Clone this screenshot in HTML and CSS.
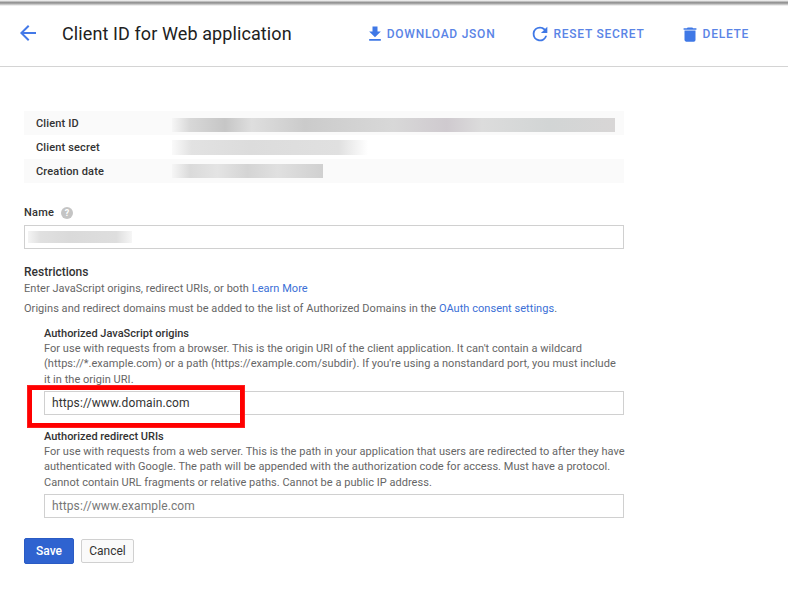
FILE: index.html
```html
<!DOCTYPE html>
<html lang="en">
<head>
<meta charset="utf-8">
<title>Client ID for Web application</title>
<link rel="stylesheet" href="styles.css">
</head>
<body>
<div class="topshade"></div>
<header class="bar">
  <svg class="back" viewBox="0 0 24 24" width="24" height="24"><path d="M20 11H7.83l5.59-5.59L12 4l-8 8 8 8 1.41-1.41L7.83 13H20z"/></svg>
  <h1 class="title">Client ID for Web application</h1>
  <nav class="actions">
    <a class="action act-dl"><svg viewBox="0 0 24 24" width="20" height="20"><path d="M19 9h-4V3H9v6H5l7 7 7-7zM5 18v2h14v-2H5z"/></svg>DOWNLOAD JSON</a>
    <a class="action act-reset"><svg viewBox="0 0 24 24" width="22" height="22"><path d="M17.65 6.35A7.96 7.96 0 0 0 12 4a8 8 0 1 0 7.73 10h-2.08A6 6 0 1 1 12 6c1.66 0 3.14.69 4.22 1.78L13 11h7V4l-2.35 2.35z"/></svg>RESET SECRET</a>
    <a class="action act-del"><svg viewBox="0 0 24 24" width="22" height="19" preserveAspectRatio="none"><path d="M6 19c0 1.1.9 2 2 2h8a2 2 0 0 0 2-2V7H6v12zM19 4h-3.5l-1-1h-5l-1 1H5v2h14V4z"/></svg>DELETE</a>
  </nav>
</header>
<main class="content">
  <div class="info">
    <div class="row shaded"><span class="key">Client ID</span><span class="blur b-id"></span></div>
    <div class="row"><span class="key">Client secret</span><span class="blur b-secret"></span></div>
    <div class="row shaded"><span class="key">Creation date</span><span class="blur b-date"></span></div>
  </div>
  <div class="name-label">Name <span class="help">?</span></div>
  <div class="input"><span class="blur b-name"></span></div>
  <h2 class="restrict">Restrictions</h2>
  <p class="note n1">Enter JavaScript origins, redirect URIs, or both <a>Learn More</a></p>
  <p class="note n2">Origins and redirect domains must be added to the list of Authorized Domains in the <a>OAuth consent settings</a>.</p>
  <section class="group g1">
    <h3 class="group-title">Authorized JavaScript origins</h3>
    <p class="desc">For use with requests from a browser. This is the origin URI of the client application. It can't contain a wildcard<br>(https://*.example.com) or a path (https://example.com/subdir). If you're using a nonstandard port, you must include<br>it in the origin URI.</p>
    <div class="input value">https://www.domain.com</div>
    <div class="redbox"></div>
  </section>
  <section class="group g2">
    <h3 class="group-title">Authorized redirect URIs</h3>
    <p class="desc">For use with requests from a web server. This is the path in your application that users are redirected to after they have<br>authenticated with Google. The path will be appended with the authorization code for access. Must have a protocol.<br>Cannot contain URL fragments or relative paths. Cannot be a public IP address.</p>
    <div class="input placeholder">https://www.example.com</div>
  </section>
  <div class="buttons">
    <button class="btn save">Save</button>
    <button class="btn cancel">Cancel</button>
  </div>
</main>
</body>
</html>
```
FILE: styles.css
```css
* { box-sizing: border-box; }
html, body { margin: 0; padding: 0; }
body {
  width: 788px;
  height: 611px;
  overflow: hidden;
  background: #fff;
  font-family: Roboto, "Liberation Sans", sans-serif;
  color: #212121;
  position: relative;
}
.topshade {
  height: 6px;
  background: linear-gradient(#fff 0, #8c8c8c 45%, #a8a8a8 60%, #fff 100%);
}
.bar {
  height: 61px;
  border-bottom: 1px solid #d4d4d4;
  display: flex;
  align-items: center;
  padding: 0 0 6px 16px;
}
.back { fill: #4379e8; flex: none; }
.title {
  margin: 0 0 0 22px;
  font-size: 18px;
  font-weight: 400;
  letter-spacing: .1px;
  color: #212121;
}
.actions { display: flex; align-items: center; margin: 2px 0 0 73px; }
.action {
  display: flex;
  align-items: center;
  font-size: 12px;
  font-weight: 500;
  letter-spacing: .75px;
  color: #5a84e6;
}
.action svg { fill: #3f78e6; flex: none; margin-right: 2px; }
.act-reset, .act-del { margin-left: 34px; }
.content { padding: 44px 0 0 24px; width: 624px; }
.info { width: 600px; }
.row {
  height: 24px;
  display: flex;
  align-items: center;
  padding-left: 12px;
  font-size: 11px;
  font-weight: 500;
  color: #333;
  position: relative;
}
.shaded { background: #fafafa; }
.key { letter-spacing: .15px; }
.blur { position: absolute; display: block; }
.b-id {
  left: 148px; top: 7px; width: 443px; height: 14px;
  background: linear-gradient(90deg, #f6f6f6 0, #d8d8d8 4%, #c6c6c6 12%, #dedede 18%, #cbcbcb 30%, #d8d8d8 50%, #cfcacf 62%, #dcdcdc 70%, #d2d5d5 85%, #d8d6d6 100%);
}
.b-secret {
  left: 148px; top: 5px; width: 196px; height: 15px;
  background: linear-gradient(90deg, #fafafa 0, #e2e2e2 10%, #dcdcdc 40%, #e0e0e0 85%, #fff 100%);
}
.b-date {
  left: 148px; top: 5px; width: 151px; height: 14px;
  background: linear-gradient(90deg, #f6f6f6 0, #dadada 12%, #e4e4e4 30%, #d4d4d4 50%, #e0e0e0 70%, #d0d0d0 100%);
}
.name-label {
  margin: 21px 0 4px;
  height: 17px;
  display: flex;
  align-items: center;
  font-size: 11px;
  font-weight: 500;
  letter-spacing: .2px;
  color: #333;
}
.help {
  width: 12px; height: 12px;
  margin-left: 7px;
  border-radius: 50%;
  background: #c4c4c4;
  color: #fff;
  font-size: 9px;
  font-weight: 700;
  line-height: 12px;
  text-align: center;
}
.input {
  height: 24px;
  border: 1px solid #d0d0d0;
  background: #fff;
  position: relative;
  font-size: 12px;
  line-height: 22px;
  padding-left: 7px;
  letter-spacing: .1px;
}
.b-name {
  left: 3px; top: 5px; width: 104px; height: 12px;
  background: linear-gradient(90deg, #f4f4f4 0, #e0e0e0 12%, #dadada 40%, #dedede 85%, #f6f6f6 100%);
}
.restrict {
  margin: 15px 0 0;
  font-size: 12px;
  font-weight: 500;
  line-height: 16px;
  color: #333;
}
.note {
  margin: 1px 0 0;
  font-size: 11px;
  line-height: 16px;
  letter-spacing: .04px;
  color: #666;
}
.n2 { margin-top: 4px; }
.note a { color: #3b6fd6; }
.group { margin-left: 20px; position: relative; }
.g1 { margin-top: 9px; }
.g2 { margin-top: 14px; }
.group-title {
  margin: 0;
  font-size: 11px;
  font-weight: 500;
  line-height: 15px;
  color: #333;
}
.desc {
  margin: 0 0 3.9px;
  font-size: 11px;
  line-height: 15.3px;
  letter-spacing: .035px;
  white-space: nowrap;
  color: #666;
}
.g2 .desc { line-height: 15.6px; margin-bottom: 3px; }
.value { color: #333; }
.placeholder { color: #777; }
.redbox {
  position: absolute;
  left: -17px;
  top: 59px;
  width: 218px;
  height: 43px;
  border: 5px solid #f00;
  outline: 1px solid rgba(255, 60, 60, .5);
  outline-offset: -1px;
}
.buttons { display: flex; align-items: center; margin-top: 20px; gap: 7px; }
.btn {
  font-family: inherit;
  font-size: 12px;
  font-weight: 500;
  padding: 0;
  border-radius: 2px;
}
.save {
  width: 50px; height: 26px;
  background: #2f63d0;
  border: 1px solid #2a5bc4;
  color: #fff;
}
.cancel {
  width: 53px; height: 24px;
  background: #fafafa;
  border: 1px solid #d0d0d0;
  color: #333;
  font-weight: 400;
}
```
